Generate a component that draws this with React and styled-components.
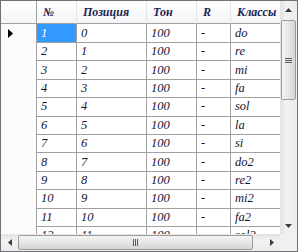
import styled, { createGlobalStyle } from "styled-components";

const GlobalStyle = createGlobalStyle`
  html, body { margin: 0; padding: 0; background: #ffffff; }
  * { box-sizing: border-box; }
`;

const columns = [
    { key: "n", title: "№", width: 40 },
    { key: "pos", title: "Позиция", width: 70 },
    { key: "ton", title: "Тон", width: 50 },
    { key: "r", title: "R", width: 34 },
    { key: "cls", title: "Классы", width: 70 },
];

const names = ["do", "re", "mi", "fa", "sol", "la", "si", "do2", "re2", "mi2", "fa2", "sol2"];
const rows = names.map((cls, i) => ({ n: i + 1, pos: i, ton: 100, r: "-", cls }));

function App() {
    return (
        <>
            <GlobalStyle />
            <Frame>
                <Viewport>
                    <Table>
                        <Corner />
                        {columns.map((c) => (
                            <HeadCell key={c.key}>{c.title}</HeadCell>
                        ))}
                        {rows.map((row, i) => (
                            <Row key={row.n} row={row} current={i === 0} />
                        ))}
                    </Table>
                </Viewport>
                <VScroll>
                    <ArrowBox><Arrow dir="up" /></ArrowBox>
                    <VTrack>
                        <VThumb><Grip vertical /></VThumb>
                    </VTrack>
                    <ArrowBox><Arrow dir="down" /></ArrowBox>
                </VScroll>
                <HScroll>
                    <ArrowBox><Arrow dir="left" /></ArrowBox>
                    <HTrack>
                        <HThumb><Grip /></HThumb>
                    </HTrack>
                    <ArrowBox><Arrow dir="right" /></ArrowBox>
                </HScroll>
                <ScrollCorner />
            </Frame>
        </>
    );
}

function Row(props) {
    const { row, current } = props;
    return (
        <>
            <RowHead>{current && <Marker />}</RowHead>
            {columns.map((c, j) => (
                <Cell key={c.key} selected={current && j === 0}>{row[c.key]}</Cell>
            ))}
        </>
    );
}

function Marker() {
    return (
        <svg width="5" height="9" viewBox="0 0 5 9">
            <path d="M0 0 L5 4.5 L0 9 Z" fill="#000" />
        </svg>
    );
}

function Arrow(props) {
    const paths = {
        up: "M0 4 L3.5 0 L7 4 Z",
        down: "M0 0 L7 0 L3.5 4 Z",
        left: "M4 0 L4 7 L0 3.5 Z",
        right: "M0 0 L4 3.5 L0 7 Z",
    };
    const horiz = props.dir === "left" || props.dir === "right";
    return (
        <svg width={horiz ? 4 : 7} height={horiz ? 7 : 4} viewBox={horiz ? "0 0 4 7" : "0 0 7 4"}>
            <path d={paths[props.dir]} fill="#3c3c3c" />
        </svg>
    );
}

function Grip(props) {
    return (
        <GripBox vertical={props.vertical}>
            <span /><span /><span />
        </GripBox>
    );
}

const Frame = styled.div`
    width: 298px;
    height: 252px;
    border: 1px solid #6f7177;
    display: grid;
    grid-template-columns: 1fr 17px;
    grid-template-rows: 1fr 17px;
    overflow: hidden;
    background: #ffffff;
`;

const Viewport = styled.div`
    overflow: hidden;
`;

const Table = styled.div`
    display: grid;
    grid-template-columns: 36px ${columns.map((c) => c.width + "px").join(" ")};
    grid-template-rows: 23px 19px repeat(11, 18.4px);
    font-family: "Liberation Serif", "DejaVu Serif", serif;
    font-style: italic;
    font-size: 12.5px;
`;

const Corner = styled.div`
    background: linear-gradient(#ffffff, #f4f5f7);
    border-right: 1px solid #a0a0a0;
    border-bottom: 1px solid #a0a0a0;
`;

const HeadCell = styled.div`
    background: linear-gradient(#ffffff, #f4f5f7);
    border-right: 1px solid #e4e5e8;
    border-bottom: 1px solid #a0a0a0;
    color: #1a2350;
    font-weight: bold;
    font-size: 12px;
    display: flex;
    align-items: center;
    padding-left: 6px;
    white-space: nowrap;
`;

const RowHead = styled.div`
    background: #fcfcfc;
    border-right: 1px solid #a0a0a0;
    display: flex;
    align-items: center;
    padding-left: 7px;
`;

const Cell = styled.div`
    border-right: 1px solid #a0a0a0;
    border-bottom: 1px solid #a0a0a0;
    background: ${(p) => (p.selected ? "#3399ff" : "#ffffff")};
    color: ${(p) => (p.selected ? "#ffffff" : "#141433")};
    display: flex;
    align-items: center;
    padding-left: 4px;
    white-space: nowrap;
    overflow: hidden;
`;

const VScroll = styled.div`
    display: flex;
    flex-direction: column;
    background: linear-gradient(90deg, #e3e3e3, #f2f2f2 40%, #ececec);
`;

const HScroll = styled.div`
    display: flex;
    background: linear-gradient(#e3e3e3, #f2f2f2 40%, #ececec);
`;

const ScrollCorner = styled.div`
    background: #f0f0f0;
`;

const ArrowBox = styled.div`
    flex: 0 0 17px;
    width: 17px;
    height: 17px;
    display: flex;
    align-items: center;
    justify-content: center;
`;

const VTrack = styled.div`
    flex: 1;
    padding: 2px 1px;
`;

const HTrack = styled.div`
    flex: 1;
    padding: 1px 10px 1px 0;
`;

const VThumb = styled.div`
    height: 80px;
    border: 1px solid #9c9c9c;
    border-radius: 2px;
    background: linear-gradient(90deg, #f4f4f4, #e6e6e6 50%, #d4d4d4);
    display: flex;
    align-items: center;
    justify-content: center;
`;

const HThumb = styled.div`
    height: 100%;
    border: 1px solid #9c9c9c;
    border-radius: 2px;
    background: linear-gradient(#f4f4f4, #e6e6e6 50%, #d4d4d4);
    display: flex;
    align-items: center;
    justify-content: center;
`;

const GripBox = styled.div`
    display: flex;
    flex-direction: ${(p) => (p.vertical ? "column" : "row")};
    gap: 1px;
    span {
        display: block;
        width: ${(p) => (p.vertical ? "7px" : "1px")};
        height: ${(p) => (p.vertical ? "1px" : "7px")};
        background: #5a5a5a;
    }
`;

export default App;
